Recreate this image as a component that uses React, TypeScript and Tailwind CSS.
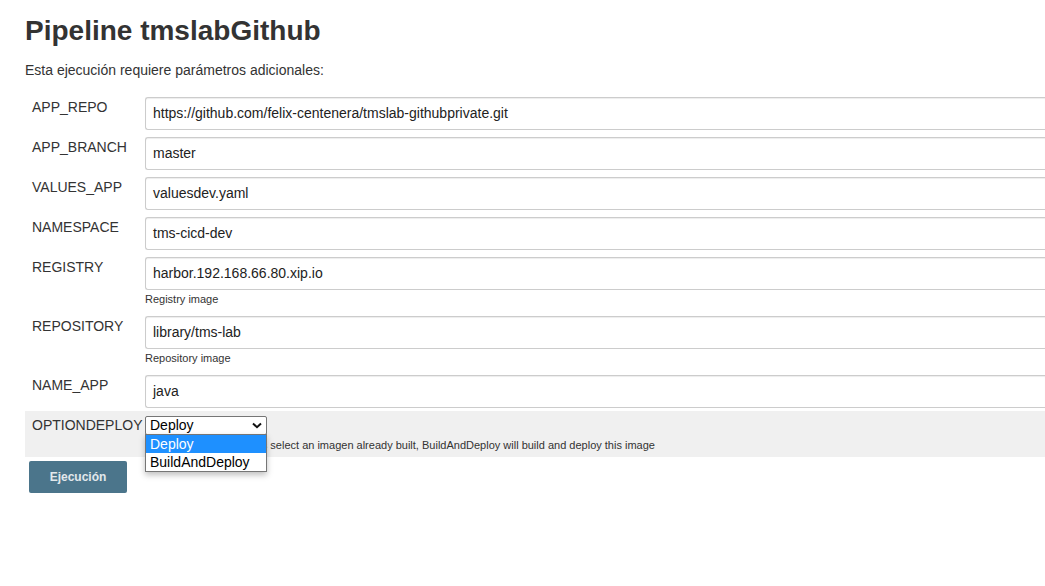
const params = [
  { name: 'APP_REPO', value: 'https://github.com/felix-centenera/tmslab-githubprivate.git' },
  { name: 'APP_BRANCH', value: 'master' },
  { name: 'VALUES_APP', value: 'valuesdev.yaml' },
  { name: 'NAMESPACE', value: 'tms-cicd-dev' },
  { name: 'REGISTRY', value: 'harbor.192.168.66.80.xip.io', help: 'Registry image' },
  { name: 'REPOSITORY', value: 'library/tms-lab', help: 'Repository image' },
  { name: 'NAME_APP', value: 'java' },
];

function ParamRow({ name, value, help }: { name: string; value: string; help?: string }) {
  return (
    <div className="flex items-start pt-[4px] pb-[3px]">
      <div className="w-[120px] shrink-0 pl-[7px] pt-[2px] text-[14px] leading-[16px] text-[#333]">{name}</div>
      <div className="flex-1 min-w-0">
        <div className="h-[33px] flex items-center pl-[7px] border border-[#ccc] border-r-0 rounded-l-[3px] shadow-[inset_0_1px_1px_rgba(0,0,0,0.075)] text-[14px] text-[#222] whitespace-nowrap">
          {value}
        </div>
        {help && <div className="text-[11px] leading-[13px] text-[#333] mt-[3px] mb-[3px]">{help}</div>}
      </div>
    </div>
  );
}

export default function App() {
  return (
    <div className="w-[1045px] h-[586px] overflow-hidden bg-white font-['Liberation_Sans',Arial,sans-serif] text-[#333]">
      <div className="pl-[25px] pt-[16px]">
        <h1 className="text-[28px] leading-[30px] font-bold text-[#333]">Pipeline tmslabGithub</h1>
        <p className="text-[14px] leading-[16px] mt-[16px]">Esta ejecución requiere parámetros adicionales:</p>

        <div className="mt-[15px]">
          {params.map((p) => (
            <ParamRow key={p.name} {...p} />
          ))}

          {/* choice parameter with its list open */}
          <div className="flex items-start bg-[#f0f0f0] h-[46px] pt-[5px]">
            <div className="w-[120px] shrink-0 pl-[7px] pt-[1px] text-[14px] leading-[16px] text-[#333]">OPTIONDEPLOY</div>
            <div className="relative flex-1">
              <div className="w-[122px] h-[19px] flex items-center justify-between pl-[4px] pr-[4px] border border-[#767676] rounded-[2px] bg-white text-[14px] text-black">
                <span>Deploy</span>
                <svg width="10" height="7" viewBox="0 0 10 7" fill="none">
                  <path d="M1 1.5L5 5.2L9 1.5" stroke="#111" strokeWidth="2" />
                </svg>
              </div>
              <div className="text-[11px] leading-[13px] text-[#333] mt-[4px] whitespace-nowrap">
                Deploy option will always select an imagen already built, BuildAndDeploy will build and deploy this image
              </div>
              <div className="absolute left-0 top-[18px] w-[122px] bg-white border border-[#767676] shadow-[0_3px_6px_rgba(0,0,0,0.25)] text-[14px] leading-[18px]">
                <div className="h-[18px] pl-[4px] bg-[#1e90ff] text-white">Deploy</div>
                <div className="h-[18px] pl-[4px] text-black">BuildAndDeploy</div>
              </div>
            </div>
          </div>
        </div>

        <button className="ml-[4px] mt-[4px] w-[98px] h-[32px] bg-[#4b758b] rounded-[2px] text-[12px] font-bold text-[#e2e8eb]">
          Ejecución
        </button>
      </div>
    </div>
  );
}
